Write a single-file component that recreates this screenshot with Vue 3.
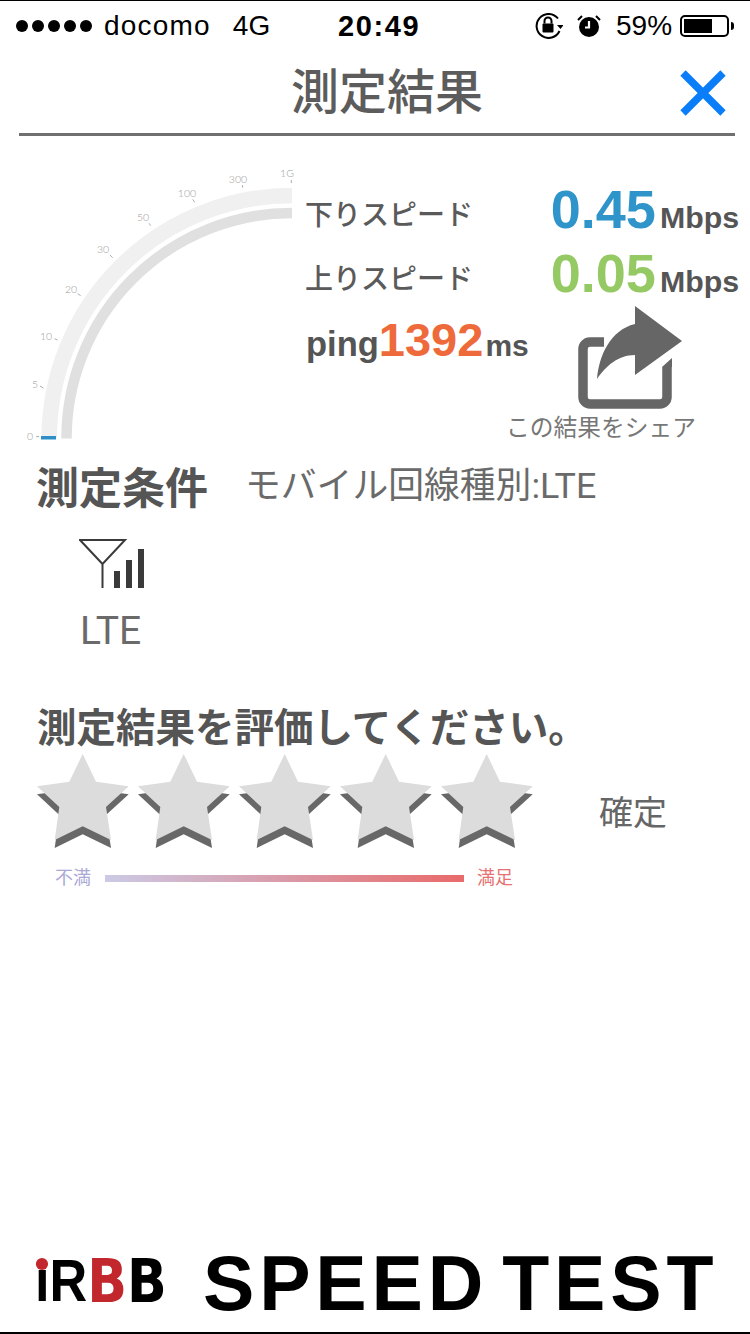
<script setup>
const ticks = [
  { t: '0', x: 30, y: 440, l: [36, 436.6, 39, 436.6] },
  { t: '5', x: 35, y: 388, l: [40, 386, 43.5, 388] },
  { t: '10', x: 46, y: 340, l: [54.5, 338.7, 57.5, 340] },
  { t: '20', x: 71, y: 293, l: [77.7, 293.7, 80.7, 295.7] },
  { t: '30', x: 103, y: 253, l: [110, 255, 112.7, 257.7] },
  { t: '50', x: 143, y: 221, l: [149, 223.3, 150.7, 225.7] },
  { t: '100', x: 187, y: 197, l: [192.7, 199.3, 194.7, 202.3] },
  { t: '300', x: 238, y: 183, l: [242.3, 185, 242.7, 187.7] },
  { t: '1G', x: 287, y: 177, l: [291.3, 180, 291.3, 183] }
]
const stars = [0, 1, 2, 3, 4]
const starPts = '45.7,0 59,27.7 91.7,32.3 69,53 74,86 45.7,72.3 17.7,86 22.3,53 0,32.3 32.3,27.7'
</script>

<template>
  <div class="page">
    <div class="status">
      <div class="st-left">
        <span class="dots"><i v-for="s in stars" :key="s"></i></span>
        <span class="carrier">docomo</span>
        <span class="net">4G</span>
      </div>
      <div class="time">20:49</div>
      <div class="st-right">
        <svg class="ic-lock" width="28" height="26" viewBox="0 0 28 26">
          <path d="M23 5.500A12 12 0 1 0 24.500 18" fill="none" stroke="#000" stroke-width="2" />
          <path d="M22 12l3.500 4 3-4z" fill="#000" />
          <rect x="7.500" y="10.500" width="11" height="9" rx="1" fill="#000" />
          <path d="M9.500 10.500V8a3.500 3.500 0 0 1 7 0v2.500" fill="none" stroke="#000" stroke-width="2" />
        </svg>
        <svg class="ic-alarm" width="24" height="24" viewBox="0 0 24 24">
          <circle cx="12" cy="13" r="10" fill="#000" />
          <path d="M12 7v6.500h-4" fill="none" stroke="#fff" stroke-width="2.200" />
          <path d="M1 6l4-4M23 6l-4-4" stroke="#000" stroke-width="2" />
        </svg>
        <span class="pct">59%</span>
        <span class="batt"><i></i></span>
        <span class="tip"></span>
      </div>
    </div>

    <header class="head">
      <h1>測定結果</h1>
      <svg class="close" width="46" height="46" viewBox="0 0 46 46">
        <path d="M3 3l40 40M43 3L3 43" stroke="#0a7ef8" stroke-width="7.500" fill="none" />
      </svg>
    </header>

    <section class="result">
      <svg class="gauge" width="306" height="300" viewBox="0 150 306 300">
        <path d="M49.200 438.500A243 243 0 0 1 292 195.500" fill="none" stroke="#f0f0f0" stroke-width="15.500" />
        <path d="M66.500 438.500A225.500 225.500 0 0 1 292 213" fill="none" stroke="#e0e0e0" stroke-width="10.500" />
        <rect x="41" y="436" width="15" height="3.500" fill="#2e8fc8" />
        <g v-for="k in ticks" :key="k.t" class="tick-g">
          <line :x1="k.l[0]" :y1="k.l[1]" :x2="k.l[2]" :y2="k.l[3]" stroke="#999" stroke-width="0.800" />
          <text :x="k.x" :y="k.y" class="tick">{{ k.t }}</text>
        </g>
      </svg>
      <div class="metrics">
        <div class="row">
          <span class="lbl">下りスピード</span>
          <span class="val"><b class="blue">0.45</b><em>Mbps</em></span>
        </div>
        <div class="row">
          <span class="lbl">上りスピード</span>
          <span class="val"><b class="green">0.05</b><em>Mbps</em></span>
        </div>
        <div class="third">
          <div class="ping"><em class="p">ping</em><b class="orange">1392</b><em>ms</em></div>
          <svg class="share" width="106" height="105" viewBox="0 0 106 105">
            <path d="M26 36H12a7 7 0 0 0-7 7V91a7 7 0 0 0 7 7H82a7 7 0 0 0 7-7V61" fill="none" stroke="#666" stroke-width="9.500" />
            <path d="M84 61L94 52V61z" fill="#666" />
            <path d="M57 0L104 35 57 69V49C40 49 28 60 19 73 21 50 32 24 57 18z" fill="#666" />
          </svg>
        </div>
        <div class="cap">この結果をシェア</div>
      </div>
    </section>

    <section class="cond">
      <div class="cond-top">
        <h2>測定条件</h2>
        <span class="mobile">モバイル回線種別:LTE</span>
      </div>
      <div class="net-box">
        <svg width="67" height="52" viewBox="0 0 67 52">
          <path d="M1 2h45L23.500 26zM23.500 26v24" fill="none" stroke="#3a3a3a" stroke-width="2" />
          <rect x="35" y="33" width="6" height="17" fill="#3a3a3a" />
          <rect x="47" y="22" width="6" height="28" fill="#3a3a3a" />
          <rect x="59" y="11" width="6" height="39" fill="#3a3a3a" />
        </svg>
        <div class="lte">LTE</div>
      </div>
    </section>

    <section class="rate">
      <h3>測定結果を評価してください。</h3>
      <div class="stars-row">
        <svg v-for="s in stars" :key="s" class="star" width="92" height="95" viewBox="0 0 92 95">
          <polygon :points="starPts" fill="#686868" transform="translate(0 8)" />
          <polygon :points="starPts" fill="#dcdcdc" />
        </svg>
        <span class="confirm">確定</span>
      </div>
      <div class="scale">
        <span class="s-l">不満</span>
        <span class="bar"></span>
        <span class="s-r">満足</span>
      </div>
    </section>

    <footer class="foot">
      <div class="rbb"><span class="i">ı<i></i></span><span class="r">R</span><span class="b red">B</span><span class="b">B</span></div>
      <div class="speed">SPEED TEST</div>
    </footer>
  </div>
</template>

<style scoped>
.page {
  width: 750px;
  height: 1334px;
  box-sizing: border-box;
  border-top: 1px solid #000;
  border-bottom: 2px solid #000;
  display: flex;
  flex-direction: column;
  overflow: hidden;
  background: #fff;
  font-family: "Liberation Sans", "Noto Sans CJK JP", sans-serif;
  color: #555;
}
.status {
  height: 50px;
  display: flex;
  align-items: center;
  color: #000;
  font-size: 28px;
}
.st-left {
  width: 338px;
  display: flex;
  align-items: center;
  padding-left: 16px;
  box-sizing: border-box;
}
.dots { display: flex; gap: 4px; width: 88px; }
.dots i { width: 12px; height: 12px; border-radius: 50%; background: #000; }
.carrier { letter-spacing: 1.200px; }
.net { margin-left: 22px; }
.time { width: 81px; font-weight: 700; font-size: 29px; letter-spacing: 1.600px; white-space: nowrap; }
.st-right { flex: 1; display: flex; align-items: center; padding-left: 116px; }
.ic-alarm { margin-left: 14px; }
.pct { margin-left: 15px; width: 64px; }
.batt { width: 49px; height: 22px; box-sizing: border-box; border: 2px solid #000; border-radius: 5px; padding: 2px; display: block; flex: none; }
.batt i { display: block; width: 28px; height: 14px; background: #000; }
.tip { width: 3px; height: 8px; background: #000; margin-left: 2px; border-radius: 0 3px 3px 0; flex: none; }

.head {
  height: 85px;
  box-sizing: border-box;
  margin-left: 19px;
  width: 716px;
  border-bottom: 3px solid #707070;
  display: flex;
  align-items: center;
}
.head h1 {
  margin: 0 0 0 272px;
  width: 390px;
  font-size: 48px;
  font-weight: 500;
  color: #5c5c5c;
  line-height: 1;
  padding-top: 2px;
}
.close { margin-left: -1px; margin-top: 2px; }

.result { display: flex; margin-top: 14px; }
.gauge { display: block; flex: none; }
.tick-g { opacity: 0.99; }
.tick { font-size: 10.500px; fill: #999; text-anchor: middle; font-family: Lato, "Liberation Sans", sans-serif; font-weight: 300; }
.metrics { width: 433px; padding-top: 35px; }
.row { height: 64px; display: flex; justify-content: space-between; align-items: flex-start; }
.lbl { font-size: 28px; font-weight: 500; line-height: 62px; color: #5a5a5a; margin-left: -1px; }
.val { display: flex; align-items: baseline; line-height: 48px; }
.val b { font-size: 54px; font-weight: 700; }
b.blue { color: #2e94c9; }
b.green { color: #95c963; }
b.orange { color: #ee6a3a; font-size: 47px; font-weight: 700; }
em { font-style: normal; font-weight: 700; font-size: 30px; color: #555; margin-left: 4px; }
.val em { font-size: 30.300px; }
.third { display: flex; height: 105px; margin-top: -7px; }
.ping { width: 272px; display: flex; align-items: baseline; line-height: 68px; white-space: nowrap; }
.ping em { font-size: 30px; margin-left: 2px; }
.ping em.p { font-size: 34.500px; margin-left: 0; }
.share { display: block; flex: none; }
.cap { margin-left: 200px; font-size: 23.750px; color: #777; line-height: 34px; white-space: nowrap; }

.cond { padding-left: 36px; margin-top: 14px; }
.cond-top { display: flex; align-items: flex-start; }
.cond h2 { margin: -3px 0 0; font-size: 43px; line-height: 56px; font-weight: 700; color: #555; }
.mobile { margin-left: 37px; font-size: 35.800px; line-height: 44px; color: #6a6a6a; font-family: Roboto, "Noto Sans CJK JP", sans-serif; font-weight: 400; white-space: nowrap; }
.net-box { margin-left: 43px; margin-top: 21px; width: 70px; }
.net-box svg { display: block; }
.lte { font-family: Roboto, sans-serif; font-size: 39px; line-height: 46px; color: #6a6a6a; margin-top: 18px; margin-left: 1px; font-weight: 400; }

.rate { padding-left: 37px; margin-top: 49px; }
.rate h3 { margin: 0; font-size: 39.500px; font-weight: 700; line-height: 50px; color: #555; white-space: nowrap; }
.stars-row { display: flex; gap: 9px; margin-top: 1px; align-items: flex-start; }
.star { display: block; flex: none; }
.confirm { margin-left: 57px; margin-top: 35px; font-size: 34px; line-height: 48px; color: #666; }
.scale { display: flex; align-items: center; margin-top: 9px; margin-left: 18px; }
.s-l, .s-r { font-size: 18px; line-height: 40px; }
.s-l { color: #a9a8d6; }
.s-r { color: #e87070; }
.bar { width: 359px; height: 7px; margin: 0 13px 0 14px; background: linear-gradient(90deg, #cbcae6, #e96a6a); }

.foot {
  margin-top: auto;
  height: 77px;
  display: flex;
  align-items: flex-start;
  padding-left: 35px;
  color: #000;
}
.rbb { display: flex; font-size: 60px; line-height: 44px; height: 44px; width: 168px; flex: none; margin-top: 4px; transform: scaleX(0.87); transform-origin: left; white-space: nowrap; }
.i { position: relative; font-weight: 700; display: block; }
.i i { position: absolute; left: 1px; top: -1px; width: 14px; height: 12px; border-radius: 50%; background: #c1272d; }
.r { font-weight: 700; display: block; }
.b { font-weight: 700; font-family: "DejaVu Sans", sans-serif; display: block; }
.red { color: #c1272d; }
.speed { font-weight: 700; font-size: 77px; line-height: 56px; letter-spacing: 4.800px; word-spacing: -12px; white-space: nowrap; }
</style>
